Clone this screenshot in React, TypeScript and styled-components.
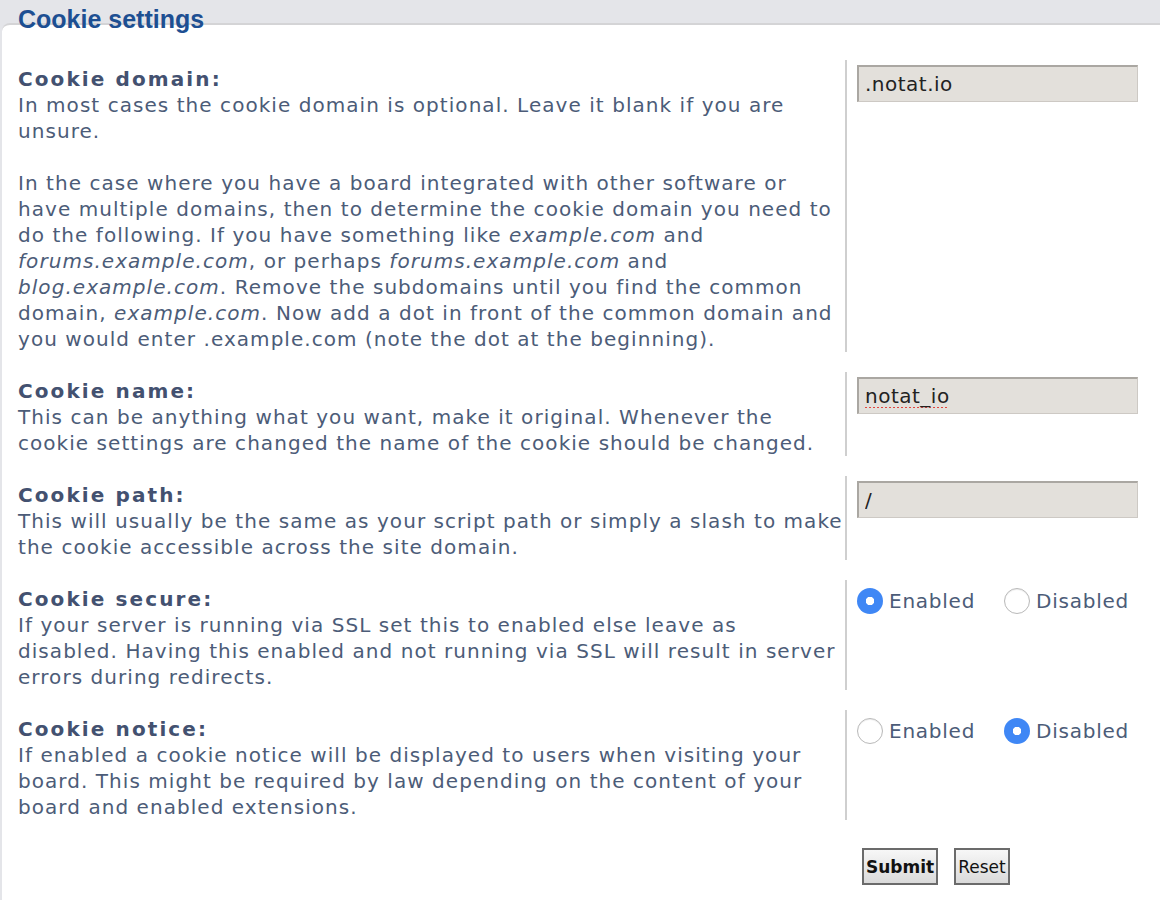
import React from "react";
import styled, { createGlobalStyle } from "styled-components";

const GlobalStyle = createGlobalStyle`
  html, body {
    margin: 0;
    padding: 0;
    background: #ffffff;
  }
  body {
    font-family: "DejaVu Sans", Verdana, sans-serif;
  }
`;

const textColor = "#4c5c78";

export default function App() {
  return (
    <Page>
      <GlobalStyle />
      <Legend>Cookie settings</Legend>
      <Panel>
        <Row>
          <Term>
            <Label>Cookie domain:</Label>
            <Explain>
              In most cases the cookie domain is optional. Leave it blank if you are unsure.
              <br />
              <br />
              In the case where you have a board integrated with other software or have multiple
              domains, then to determine the cookie domain you need to do the following. If you
              have something like <em>example.com</em> and <em>forums.example.com</em>, or perhaps{" "}
              <em>forums.example.com</em> and <em>blog.example.com</em>. Remove the subdomains until
              you find the common domain, <em>example.com</em>. Now add a dot in front of the common
              domain and you would enter .example.com (note the dot at the beginning).
            </Explain>
          </Term>
          <Field>
            <TextInput defaultValue=".notat.io" />
          </Field>
        </Row>

        <Row>
          <Term>
            <Label>Cookie name:</Label>
            <Explain>
              This can be anything what you want, make it original. Whenever the cookie settings
              are changed the name of the cookie should be changed.
            </Explain>
          </Term>
          <Field>
            <TextInput defaultValue="notat_io" $misspelled />
          </Field>
        </Row>

        <Row>
          <Term>
            <Label>Cookie path:</Label>
            <Explain>
              This will usually be the same as your script path or simply a slash to make the
              cookie accessible across the site domain.
            </Explain>
          </Term>
          <Field>
            <TextInput defaultValue="/" />
          </Field>
        </Row>

        <Row>
          <Term>
            <Label>Cookie secure:</Label>
            <Explain>
              If your server is running via SSL set this to enabled else leave as
              <br />
              disabled. Having this enabled and not running via SSL will result in server errors
              during redirects.
            </Explain>
          </Term>
          <Field>
            <RadioGroup>
              <RadioLabel>
                <Radio type="radio" name="cookie_secure" defaultChecked />
                Enabled
              </RadioLabel>
              <RadioLabel>
                <Radio type="radio" name="cookie_secure" />
                Disabled
              </RadioLabel>
            </RadioGroup>
          </Field>
        </Row>

        <Row>
          <Term>
            <Label>Cookie notice:</Label>
            <Explain>
              If enabled a cookie notice will be displayed to users when visiting your board. This
              might be required by law depending on the content of your board and enabled
              extensions.
            </Explain>
          </Term>
          <Field>
            <RadioGroup>
              <RadioLabel>
                <Radio type="radio" name="cookie_notice" />
                Enabled
              </RadioLabel>
              <RadioLabel>
                <Radio type="radio" name="cookie_notice" defaultChecked />
                Disabled
              </RadioLabel>
            </RadioGroup>
          </Field>
        </Row>

        <Buttons>
          <Spacer />
          <ButtonBar>
            <Button $primary>Submit</Button>
            <Button>Reset</Button>
          </ButtonBar>
        </Buttons>
      </Panel>
    </Page>
  );
}

const Page = styled.div`
  width: 1160px;
  height: 900px;
  overflow: hidden;
  background: #e4e5e9;
`;

const Legend = styled.div`
  height: 23px;
  padding-left: 18px;
  padding-top: 6px;
  box-sizing: border-box;
  font-family: "Liberation Sans", Arial, sans-serif;
  font-size: 25px;
  line-height: 26px;
  font-weight: bold;
  color: #1d4f92;
  white-space: nowrap;
`;

const Panel = styled.div`
  background: #ffffff;
  border-top: 2px solid #d4d4d6;
  border-top-left-radius: 8px;
  margin-left: 2px;
  padding-top: 35px;
  height: 100%;
`;

const Row = styled.dl`
  display: grid;
  grid-template-columns: 843px 1fr;
  margin: 0 0 20px;
`;

const Term = styled.dt`
  padding: 6px 0 0 16px;
  color: ${textColor};
  font-size: 20px;
  line-height: 26px;
  letter-spacing: 1.05px;
`;

const Label = styled.div`
  font-weight: bold;
  color: #435170;
  letter-spacing: 2.1px;
`;

const Explain = styled.div`
  em {
    font-style: italic;
  }
`;

const Field = styled.dd`
  margin: 0;
  border-left: 2px solid #cfcfcf;
  padding: 5px 0 0 10px;
`;

const TextInput = styled.input<{ $misspelled?: boolean }>`
  box-sizing: border-box;
  width: 281px;
  height: 37px;
  padding: 0 6px;
  background: #e3e0db;
  border: 1px solid #cdc9c4;
  border-top: 2px solid #aaa7a2;
  border-left: 2px solid #aaa7a2;
  font-family: "DejaVu Sans", Verdana, sans-serif;
  font-size: 20px;
  letter-spacing: 0.5px;
  color: #222222;
  outline: none;
  text-decoration: ${(p) => (p.$misspelled ? "underline dotted #e2463f" : "none")};
  text-underline-offset: 4px;
`;

const RadioGroup = styled.div`
  display: flex;
  align-items: center;
  gap: 29px;
  margin-top: 3px;
`;

const RadioLabel = styled.label`
  display: flex;
  align-items: center;
  gap: 6px;
  font-size: 20px;
  line-height: 26px;
  letter-spacing: 0.75px;
  color: ${textColor};
`;

const Radio = styled.input`
  appearance: none;
  margin: 0;
  width: 26px;
  height: 26px;
  border-radius: 50%;
  border: 1px solid #b9b9b9;
  background: #ffffff;
  box-shadow: inset 0 1px 1px rgba(0, 0, 0, 0.08);
  box-sizing: border-box;

  &:checked {
    border: none;
    background: radial-gradient(circle, #ffffff 0 4px, #3f87f5 4.5px);
    box-shadow: none;
  }
`;

const Buttons = styled.div`
  display: grid;
  grid-template-columns: 843px 1fr;
  padding-top: 8px;
`;

const Spacer = styled.div``;

const ButtonBar = styled.div`
  display: flex;
  gap: 16px;
  padding-left: 17px;
`;

const Button = styled.button<{ $primary?: boolean }>`
  height: 37px;
  padding: 0 2px;
  border: 2px solid #6b6b6b;
  background: linear-gradient(#f7f7f7, #dadada);
  font-family: "DejaVu Sans", Verdana, sans-serif;
  font-size: 17px;
  font-weight: ${(p) => (p.$primary ? "bold" : "normal")};
  color: #111111;
`;
